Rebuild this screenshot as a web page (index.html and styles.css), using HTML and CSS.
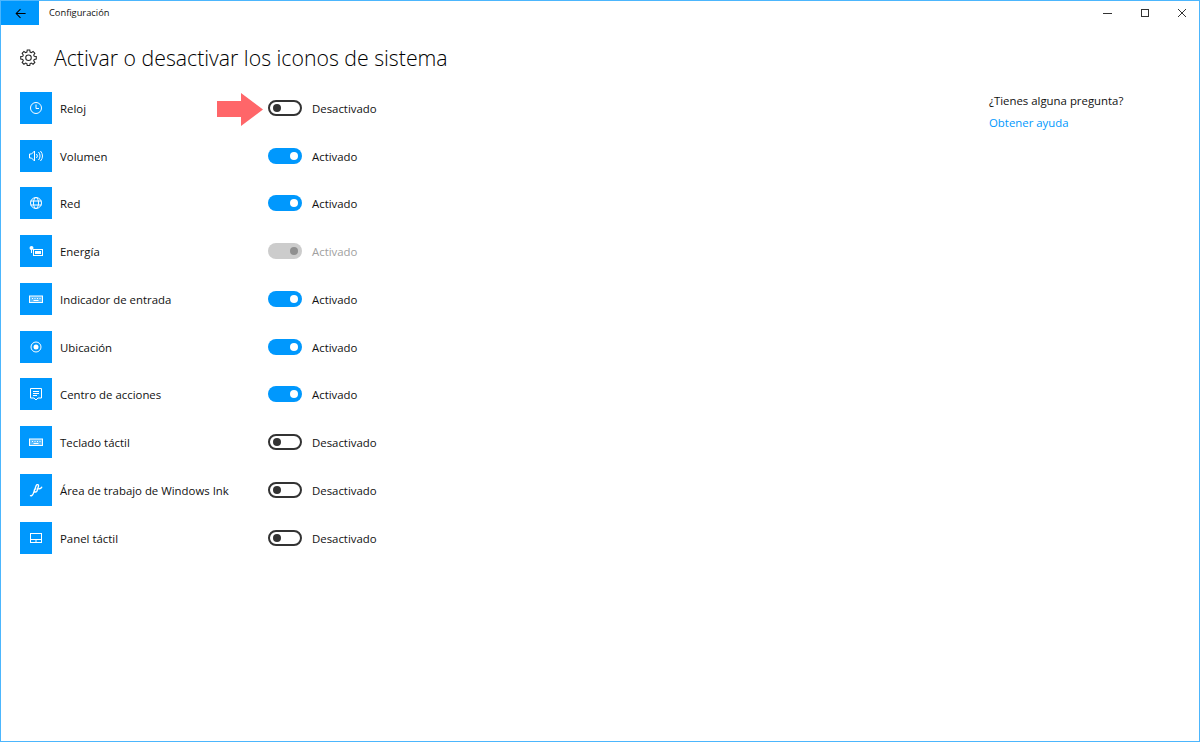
FILE: index.html
```html
<!DOCTYPE html>
<html lang="es">
<head>
<meta charset="utf-8">
<title>Configuración</title>
<link rel="stylesheet" href="styles.css">
</head>
<body>
<div class="window">
  <header class="titlebar">
    <button class="back"><svg width="11" height="11" viewBox="0 0 14 14"><path d="M13.500 7H1.500M7 1.500 1.500 7 7 12.500" fill="none" stroke="#000" stroke-width="1.300"/></svg></button>
    <span class="apptitle">Configuración</span>
    <div class="controls">
      <svg class="ctl" width="10" height="10" viewBox="0 0 10 10"><path d="M0 5.500h9" stroke="#333" fill="none"/></svg>
      <svg class="ctl" width="10" height="10" viewBox="0 0 10 10"><rect x="1.500" y="1.500" width="7" height="7" stroke="#333" fill="none"/></svg>
      <svg class="ctl" width="10" height="10" viewBox="0 0 10 10"><path d="M1 1l8 8M9 1 1 9" stroke="#333" fill="none"/></svg>
    </div>
  </header>
  <main class="content">
    <div class="main-col">
      <div class="heading">
        <svg class="gear" width="17" height="17" viewBox="0 0 16 16"><path d="M6.800 1h2.400l.3 1.900 1.200.5 1.600-1.100 1.700 1.700-1.100 1.600.5 1.200 1.900.3v2.400l-1.900.3-.5 1.200 1.100 1.600-1.700 1.700-1.600-1.100-1.200.5-.3 1.900H6.800l-.3-1.900-1.200-.5-1.600 1.100L2 12.600l1.100-1.600-.5-1.200L.7 9.500V7.100l1.900-.3.5-1.200L2 4l1.700-1.700 1.600 1.100 1.200-.5z" fill="none" stroke="#222"/><circle cx="8" cy="8.300" r="2.600" fill="none" stroke="#222"/></svg>
        <h1>Activar o desactivar los iconos de sistema</h1>
      </div>
      <ul class="list">
        <li class="row">
          <span class="tile"><svg width="14" height="14" viewBox="0 0 14 14"><circle cx="7" cy="7" r="5.500"/><path d="M7 3.500V7.500H10"/></svg></span>
          <span class="label">Reloj</span>
          <span class="toggle off"><i></i></span><span class="state">Desactivado</span>
          <svg class="arrow" width="47" height="33" viewBox="0 0 47 33"><path d="M0 8H24V0L46 16.500 24 33V24H0z" fill="#ff6669"/></svg>
        </li>
        <li class="row">
          <span class="tile"><svg width="14" height="14" viewBox="0 0 14 14"><path d="M.5 5v4h2l3 3V2l-3 3zM7.500 5a3 3 0 0 1 0 4M9.500 3a6 6 0 0 1 0 8M11.500 2a8 8 0 0 1 0 10"/></svg></span>
          <span class="label">Volumen</span>
          <span class="toggle on"><i></i></span><span class="state">Activado</span>
        </li>
        <li class="row">
          <span class="tile"><svg width="14" height="14" viewBox="0 0 14 14"><circle cx="7" cy="7" r="5.500"/><ellipse cx="7" cy="7" rx="2.500" ry="5.500"/><path d="M1.500 5h11M1.500 9h11"/></svg></span>
          <span class="label">Red</span>
          <span class="toggle on"><i></i></span><span class="state">Activado</span>
        </li>
        <li class="row">
          <span class="tile"><svg width="14" height="14" viewBox="0 0 14 14"><rect x="4.500" y="5.500" width="9" height="6"/><rect class="solid" x="6" y="7" width="6" height="3"/><circle class="solid" cx="2.500" cy="4" r="2"/><path d="M2.500 5.500v3.500"/></svg></span>
          <span class="label">Energía</span>
          <span class="toggle dis"><i></i></span><span class="state muted">Activado</span>
        </li>
        <li class="row">
          <span class="tile"><svg width="14" height="14" viewBox="0 0 14 14"><rect class="soft" x=".5" y="4" width="13" height="6.500"/><path d="M3 6.500h1M5.500 6.500h1M8 6.500h1M10.500 6.500h1M4.500 8.500h5"/></svg></span>
          <span class="label">Indicador de entrada</span>
          <span class="toggle on"><i></i></span><span class="state">Activado</span>
        </li>
        <li class="row">
          <span class="tile"><svg width="14" height="14" viewBox="0 0 14 14"><circle cx="7" cy="7" r="5"/><circle class="solid" cx="7" cy="7" r="2.500"/></svg></span>
          <span class="label">Ubicación</span>
          <span class="toggle on"><i></i></span><span class="state">Activado</span>
        </li>
        <li class="row">
          <span class="tile"><svg width="14" height="14" viewBox="0 0 14 14"><path d="M1.500 1.500h11v9.500H9l-2 2-2-2H1.500zM4 4.500h6M4 6.500h6M4 8.500h4"/></svg></span>
          <span class="label">Centro de acciones</span>
          <span class="toggle on"><i></i></span><span class="state">Activado</span>
        </li>
        <li class="row">
          <span class="tile"><svg width="14" height="14" viewBox="0 0 14 14"><rect class="soft" x=".5" y="4" width="13" height="6.500"/><path d="M3 6.500h1M5.500 6.500h1M8 6.500h1M10.500 6.500h1M4.500 8.500h5"/></svg></span>
          <span class="label">Teclado táctil</span>
          <span class="toggle off"><i></i></span><span class="state">Desactivado</span>
        </li>
        <li class="row">
          <span class="tile"><svg width="14" height="14" viewBox="0 0 14 14"><path class="ink" d="M1 12.500c1.500.8 2.700-.5 3.300-2L7.200 2.500c.6-1.500 2.800-1 2.300.7L8 8c-.5 1.500-3 1.300-2.800-.5C5.300 6 6.500 5.700 7.500 6M9.500 6c1.700 0 3-.8 3.500-2.200" /></svg></span>
          <span class="label">Área de trabajo de Windows Ink</span>
          <span class="toggle off"><i></i></span><span class="state">Desactivado</span>
        </li>
        <li class="row">
          <span class="tile"><svg width="14" height="14" viewBox="0 0 14 14"><rect x="1.500" y="2.500" width="11" height="9"/><path d="M1.500 8.500h11M7 8.500v3"/></svg></span>
          <span class="label">Panel táctil</span>
          <span class="toggle off"><i></i></span><span class="state">Desactivado</span>
        </li>
      </ul>
    </div>
    <aside class="help">
      <p>¿Tienes alguna pregunta?</p>
      <a href="#">Obtener ayuda</a>
    </aside>
  </main>
</div>
</body>
</html>
```
FILE: styles.css
```css
* { box-sizing: border-box; }
html, body { margin: 0; height: 100%; }
body { font-family: "Open Sans", "Noto Sans", "Liberation Sans", sans-serif; background: #fff; color: #1a1a1a; }
.window { width: 1200px; height: 742px; border: 1px solid #4cb6fd; display: flex; flex-direction: column; overflow: hidden; }
.titlebar { height: 24px; display: flex; align-items: center; flex: none; }
.back { width: 38px; height: 24px; border: 0; padding: 0; background: #0098fd; display: flex; align-items: center; justify-content: center; }
.apptitle { margin: 0 0 1px 10px; font-size: 9.300px; color: #111; }
.controls { margin-left: auto; display: flex; }
.ctl { width: 10px; margin-right: 27px; }
.controls .ctl:last-child { margin-right: 12px; }
.content { flex: 1; display: flex; justify-content: space-between; }
.main-col { padding-left: 19px; }
.heading { height: 59px; display: flex; align-items: center; padding-top: 5px; }
.gear { margin-right: 17px; flex: none; }
h1 { margin: 0; font-size: 21.250px; font-weight: 300; color: #000; white-space: nowrap; }
.list { list-style: none; margin: 0; padding: 0; }
.row { height: 47.750px; position: relative; display: flex; align-items: center; }
.tile { width: 32px; height: 32px; background: #0098fd; display: flex; align-items: center; justify-content: center; flex: none; }
.tile svg { fill: none; stroke: #fff; stroke-width: 1; }
.tile svg .solid { fill: #fff; stroke: none; }
.tile svg .soft { fill: rgba(255, 255, 255, .35); }
.tile svg .ink { stroke-width: 1.300; }
.label { width: 208px; margin-left: 8px; padding-top: 1px; font-size: 11.400px; color: #111; white-space: nowrap; }
.toggle { width: 34px; height: 16px; border-radius: 8px; display: flex; align-items: center; flex: none; padding: 0 4px; }
.toggle i { width: 8px; height: 8px; border-radius: 50%; display: block; }
.toggle.on { background: #0098fd; justify-content: flex-end; }
.toggle.on i { background: #fff; }
.toggle.off { border: 2px solid #333; padding: 0 3px; }
.toggle.off i { background: #333; }
.toggle.dis { background: #ccc; justify-content: flex-end; }
.toggle.dis i { background: #8f8f8f; }
.state { margin-left: 10px; padding-top: 1px; font-size: 11.400px; color: #111; }
.state.muted { color: #a0a0a0; }
.arrow { position: absolute; left: 197px; top: 9px; }
.help { width: 210px; padding-top: 68px; font-size: 11.400px; }
.help p { margin: 0 0 7px; color: #111; }
.help a { color: #0098fd; text-decoration: none; }
```
